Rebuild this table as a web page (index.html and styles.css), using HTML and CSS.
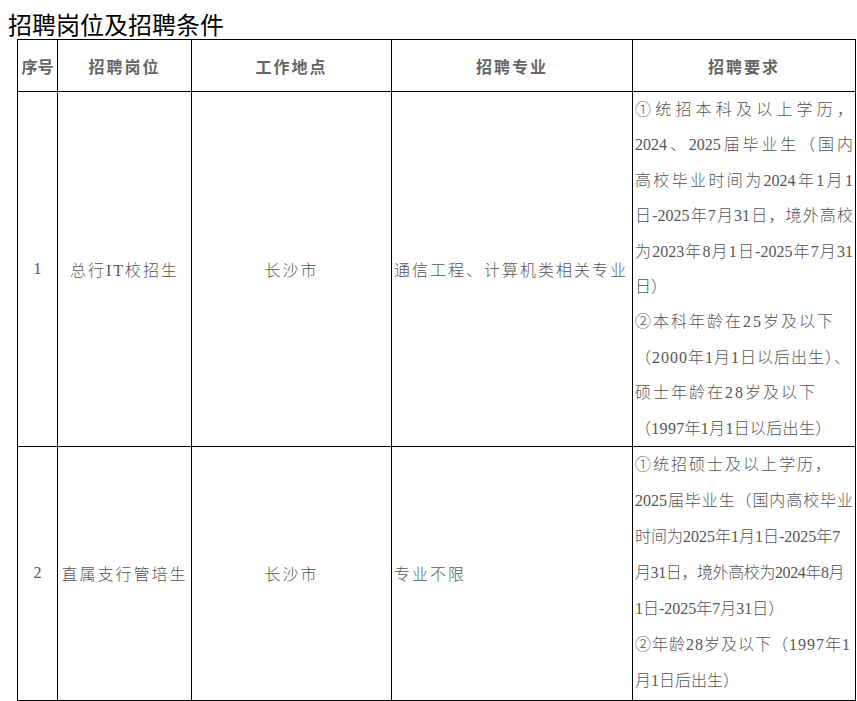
FILE: index.html
```html
<!DOCTYPE html>
<html lang="zh-CN">
<head>
<meta charset="utf-8">
<title>招聘岗位及招聘条件</title>
<link rel="stylesheet" href="styles.css">
</head>
<body>
<h1 class="title">招聘岗位及招聘条件</h1>
<table class="jobs">
  <colgroup>
    <col class="c-no"><col class="c-pos"><col class="c-loc"><col class="c-major"><col class="c-req">
  </colgroup>
  <thead>
    <tr class="head-row">
      <th>序号</th>
      <th class="sp">招聘岗位</th>
      <th class="sp">工作地点</th>
      <th class="sp">招聘专业</th>
      <th class="sp">招聘要求</th>
    </tr>
  </thead>
  <tbody>
    <tr class="row1">
      <td class="center">1</td>
      <td class="center sp">总行IT校招生</td>
      <td class="center sp">长沙市</td>
      <td class="left sp">通信工程、计算机类相关专业</td>
      <td class="req">
        <div class="ln full">①统招本科及以上学历，</div>
        <div class="ln full">2024、2025届毕业生（国内</div>
        <div class="ln full">高校毕业时间为2024年1月1</div>
        <div class="ln full">日-2025年7月31日，境外高校</div>
        <div class="ln full">为2023年8月1日-2025年7月31</div>
        <div class="ln">日）</div>
        <div class="ln s2">②本科年龄在25岁及以下</div>
        <div class="ln s1">（2000年1月1日以后出生）、</div>
        <div class="ln s2">硕士年龄在28岁及以下</div>
        <div class="ln s05">（1997年1月1日以后出生）</div>
      </td>
    </tr>
    <tr class="row2">
      <td class="center">2</td>
      <td class="center sp">直属支行管培生</td>
      <td class="center sp">长沙市</td>
      <td class="left sp">专业不限</td>
      <td class="req r2">
        <div class="ln s2">①统招硕士及以上学历，</div>
        <div class="ln full">2025届毕业生（国内高校毕业</div>
        <div class="ln s0">时间为2025年1月1日-2025年7</div>
        <div class="ln sm">月31日，境外高校为2024年8月</div>
        <div class="ln s0">1日-2025年7月31日）</div>
        <div class="ln s1">②年龄28岁及以下（1997年1</div>
        <div class="ln s0">月1日后出生）</div>
      </td>
    </tr>
  </tbody>
</table>
</body>
</html>
```
FILE: styles.css
```css
html, body {
  margin: 0;
  padding: 0;
  background: #fff;
}
body {
  font-family: "Liberation Serif", "Noto Sans CJK SC", serif;
  color: #555;
}
.title {
  margin: 9px 0 0 8px;
  height: 30px;
  font-family: "Noto Sans CJK SC", sans-serif;
  font-size: 24px;
  line-height: 30px;
  font-weight: 400;
  color: #000;
}
.jobs {
  margin-left: 17px;
  width: 838px;
  table-layout: fixed;
  border-collapse: collapse;
  font-size: 16px;
}
.c-no { width: 40px; }
.c-pos { width: 134px; }
.c-loc { width: 200px; }
.c-major { width: 241px; }
.c-req { width: 223px; }
.jobs th, .jobs td {
  border: 1px solid #000;
  padding: 0 2px;
  vertical-align: middle;
}
.jobs th {
  font-family: "Noto Sans CJK SC", sans-serif;
  font-weight: 700;
  font-size: 16px;
  color: #666;
  text-align: center;
  white-space: nowrap;
}
.head-row { height: 52px; }
.row1 { height: 354px; }
.row2 { height: 254px; }
.sp { letter-spacing: 2px; }
.center { text-align: center; }
.left { text-align: left; padding-left: 3px; white-space: nowrap; }
.jobs td { font-weight: 300; }
.req {
  padding: 0 0 0 2px;
}
.ln {
  height: 35.4px;
  line-height: 35.4px;
  white-space: nowrap;
  text-align: left;
}
.r2 .ln {
  height: 36px;
  line-height: 36px;
}
.ln.full {
  white-space: normal;
  text-align: justify;
  text-align-last: justify;
  overflow: hidden;
}
.s0 { letter-spacing: 0; }
.sm { letter-spacing: -0.4px; }
.s05 { letter-spacing: 0.3px; }
.s1 { letter-spacing: 1px; }
.s2 { letter-spacing: 2px; }
```
